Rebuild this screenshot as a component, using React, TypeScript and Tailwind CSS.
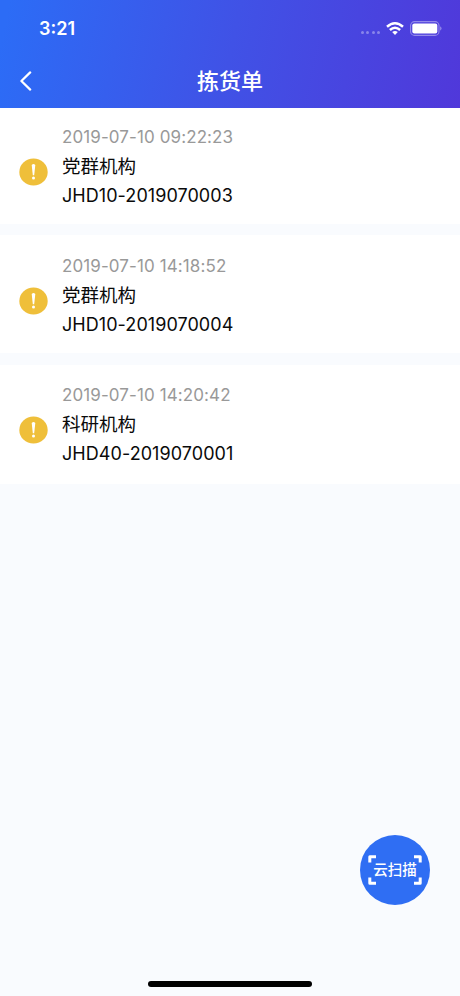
const orders = [
  { time: "2019-07-10 09:22:23", dept: "党群机构", code: "JHD10-2019070003" },
  { time: "2019-07-10 14:18:52", dept: "党群机构", code: "JHD10-2019070004" },
  { time: "2019-07-10 14:20:42", dept: "科研机构", code: "JHD40-2019070001" },
];

const StatusBar = () => {
  return (
    <div className="flex h-[54px] items-center justify-between pt-[2px] pl-[39px] pr-[18px]">
      <span className="pt-[2px] text-[18px] font-semibold leading-none">3:21</span>
      <div className="flex items-center">
        <div className="mr-[6px] mt-[9px] flex gap-[2.5px]">
          <i className="h-[3px] w-[3px] rounded-full bg-white/35" />
          <i className="h-[3px] w-[3px] rounded-full bg-white/35" />
          <i className="h-[3px] w-[3px] rounded-full bg-white/35" />
          <i className="h-[3px] w-[3px] rounded-full bg-white/35" />
        </div>
        <svg width="18" height="13" viewBox="0 0 18 13" className="mr-[6px]" fill="none" stroke="#fff" strokeWidth="2.5">
          <path d="M1 4.8Q9-2.2 17 4.8" />
          <path d="M3.9 8Q9 3.5 14.1 8" />
          <path d="M6.2 10.1Q9 7.8 11.8 10.1L9 12.9Z" fill="#fff" stroke="none" />
        </svg>
        <svg width="32" height="15" viewBox="0 0 32 15">
          <rect x="0.6" y="0.6" width="28.4" height="13.8" rx="4" fill="none" stroke="#fff" strokeOpacity="0.4" strokeWidth="1.1" />
          <rect x="2.3" y="2.4" width="25" height="10.2" rx="2" fill="#fff" />
          <path d="M30.3 5.3Q32.6 7.5 30.3 9.7Z" fill="#fff" fillOpacity="0.5" />
        </svg>
      </div>
    </div>
  );
};

const Header = () => {
  return (
    <header className="h-[108px] bg-linear-[102deg,#2c6cf6_2%,#4052e6_50%,#5038da_100%] text-white">
      <StatusBar />
      <div className="grid h-[54px] grid-cols-[60px_1fr_60px] items-center">
        <svg width="12" height="20" viewBox="0 0 12 20" className="ml-[20px]" fill="none" stroke="#fff" strokeWidth="2.2" strokeLinecap="round" strokeLinejoin="round">
          <path d="M10.2 1.4L1.4 10L10.2 18.6" />
        </svg>
        <h1 className="text-center text-[22px] font-medium leading-none">拣货单</h1>
      </div>
    </header>
  );
};

const WarnIcon = () => {
  return (
    <svg width="29" height="28" viewBox="0 0 29 28" className="shrink-0">
      <ellipse cx="14.5" cy="14" rx="14.2" ry="13.6" fill="#efbf3a" />
      <path d="M12.7 6.9Q14.5 5.3 16.3 6.9L15.2 17.2H13.8Z" fill="#fff" />
      <circle cx="14.5" cy="20" r="1.5" fill="#fff" />
    </svg>
  );
};

const OrderItem = ({ time, dept, code }: { time: string; dept: string; code: string }) => {
  return (
    <li className="flex h-[118px] items-start bg-white pl-[19px] pt-[16.5px] first:h-[116px] first:pt-[15.2px] last:h-[119px]">
      <div className="mt-[35px]">
        <WarnIcon />
      </div>
      <div className="ml-[14px] whitespace-nowrap text-[18px] leading-[29px] text-[#0a0a0a]">
        <p className="text-[17px] tracking-[0.1px] text-[#999]">{time}</p>
        <p className="text-[18.5px]">{dept}</p>
        <p className="tracking-[0.06px]">{code}</p>
      </div>
    </li>
  );
};

const ScanButton = () => {
  return (
    <button className="absolute left-[360px] top-[835px] grid h-[70px] w-[70px] place-items-center rounded-full bg-[#2f6ef3] text-white">
      <svg width="54" height="30" viewBox="0 0 54 30" className="col-start-1 row-start-1" fill="none" stroke="#fff" strokeWidth="3" strokeLinejoin="round">
        <path d="M1.8 7.5V1.8H8M46 1.8H52.2V7.5M1.8 22.5V28.2H8M46 28.2H52.2V22.5" />
      </svg>
      <span className="col-start-1 row-start-1 text-[14.5px] font-medium leading-none">云扫描</span>
    </button>
  );
};

const App = () => {
  return (
    <div className="relative flex h-[996px] w-[460px] flex-col overflow-hidden bg-[#f9fbfe] font-['Inter','Noto_Sans_CJK_SC',sans-serif]">
      <Header />
      <ul className="flex flex-col gap-[11.3px]">
        {orders.map((order) => (
          <OrderItem key={order.code} {...order} />
        ))}
      </ul>
      <ScanButton />
      <div className="mx-auto mb-[9px] mt-auto h-[6px] w-[164px] rounded-full bg-black" />
    </div>
  );
};

export default App;
